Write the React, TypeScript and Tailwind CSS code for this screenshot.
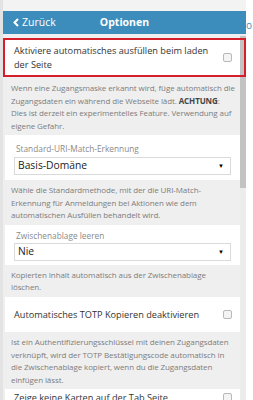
import React from "react";

const Checkbox = () => (
  <span className="block w-[9px] h-[9px] shrink-0 rounded-[2px] border border-[#b9b9b9] bg-[#f4f4f4]" />
);

const SelectBox = ({ value, mt }: { value: string; mt: string }) => (
  <div className={`${mt} h-[18px] flex items-center justify-between border border-[#dadada] bg-white pl-[3px] pr-[6px] text-[10.3px] text-[#222]`}>
    <span>{value}</span>
    <span className="text-[6px] leading-none text-black">▼</span>
  </div>
);

const CheckRow = ({ lines, pad }: { lines: string[]; pad: string }) => (
  <div className={`bg-white flex items-center justify-between pl-[9px] pr-[8px] ${pad}`}>
    <span className="text-[9.2px] leading-[13.5px] text-[#333] whitespace-nowrap">
      {lines.map((l, i) => (
        <div key={i}>{l}</div>
      ))}
    </span>
    <Checkbox />
  </div>
);

const SelectRow = ({ label, value, pad, mt }: { label: string; value: string; pad: string; mt: string }) => (
  <div className={`bg-white pl-[9px] pr-[9px] ${pad}`}>
    <div className="text-[8.3px] leading-[12px] text-[#8a8a8a] pl-[2px]">{label}</div>
    <SelectBox value={value} mt={mt} />
  </div>
);

const Note = ({ children, pt = "pt-[4px]" }: { children: React.ReactNode; pt?: string }) => (
  <div className={`pl-[6px] ${pt} pb-[3px] text-[8px] tracking-[-0.1px] leading-[12.5px] text-[#7d7d7d] whitespace-nowrap`}>
    {children}
  </div>
);

const App = () => {
  return (
    <div className="relative w-[253px] h-[400px] overflow-hidden bg-white flex font-['Open_Sans',sans-serif]">
      <div className="w-[3px] bg-[#e3e3e3]" />
      <div className="w-[243px] flex flex-col">
        <div className="h-[11px] bg-[#f3f3f3]" />
        <header className="h-[23px] bg-[#3c8dbc] flex items-center relative text-white text-[10.5px]">
          <span className="pl-[10px] flex items-center gap-[3px]">
            <svg width="6" height="9" viewBox="0 0 6 9">
              <path d="M5 1 L1.5 4.5 L5 8" stroke="white" strokeWidth="2" fill="none" />
            </svg>
            Zurück
          </span>
          <span className="absolute left-0 right-0 text-center font-bold">Optionen</span>
        </header>
        <div className="flex flex-1 min-h-0">
          <main className="w-[237px] bg-[#efefef] pl-[2px] pt-[6px]">
            <CheckRow pad="pt-[4px] pb-[5px]" lines={["Aktiviere automatisches ausfüllen beim laden", "der Seite"]} />
            <Note pt="pt-[6px]">
              Wenn eine Zugangsmaske erkannt wird, füge automatisch die
              <br />
              Zugangsdaten ein während die Webseite lädt. <b className="text-[#444]">ACHTUNG</b>:
              <br />
              Dies ist derzeit ein experimentelles Feature. Verwendung auf
              <br />
              eigene Gefahr.
            </Note>
            <SelectRow label="Standard-URI-Match-Erkennung" value="Basis-Domäne" pad="pt-[8px] pb-[5px]" mt="mt-[2px]" />
            <Note>
              Wähle die Standardmethode, mit der die URI-Match-
              <br />
              Erkennung für Anmeldungen bei Aktionen wie dem
              <br />
              automatischen Ausfüllen behandelt wird.
            </Note>
            <SelectRow label="Zwischenablage leeren" value="Nie" pad="pt-[5px] pb-[4px]" mt="mt-[1px]" />
            <Note>
              Kopierten Inhalt automatisch aus der Zwischenablage
              <br />
              löschen.
            </Note>
            <CheckRow pad="py-[11px]" lines={["Automatisches TOTP Kopieren deaktivieren"]} />
            <Note>
              Ist ein Authentifizierungsschlüssel mit deinen Zugangsdaten
              <br />
              verknüpft, wird der TOTP Bestätigungscode automatisch in
              <br />
              die Zwischenablage kopiert, wenn du die Zugangsdaten
              <br />
              einfügen lässt.
            </Note>
            <CheckRow pad="pt-[2px] pb-[10px]" lines={["Zeige keine Karten auf der Tab Seite"]} />
          </main>
          <div className="w-[6px] bg-[#ececec]">
            <div className="mt-[2px] h-[152px] bg-[#c3c3c3]" />
          </div>
        </div>
      </div>
      <div className="flex-1 bg-white">
        <div className="mt-[18px] text-[10px] text-[#3c8dbc]">o</div>
      </div>
      <div className="absolute left-[3px] top-[38px] w-[243px] h-[39px] border-2 border-[#d41f2b]" />
    </div>
  );
};

export default App;
